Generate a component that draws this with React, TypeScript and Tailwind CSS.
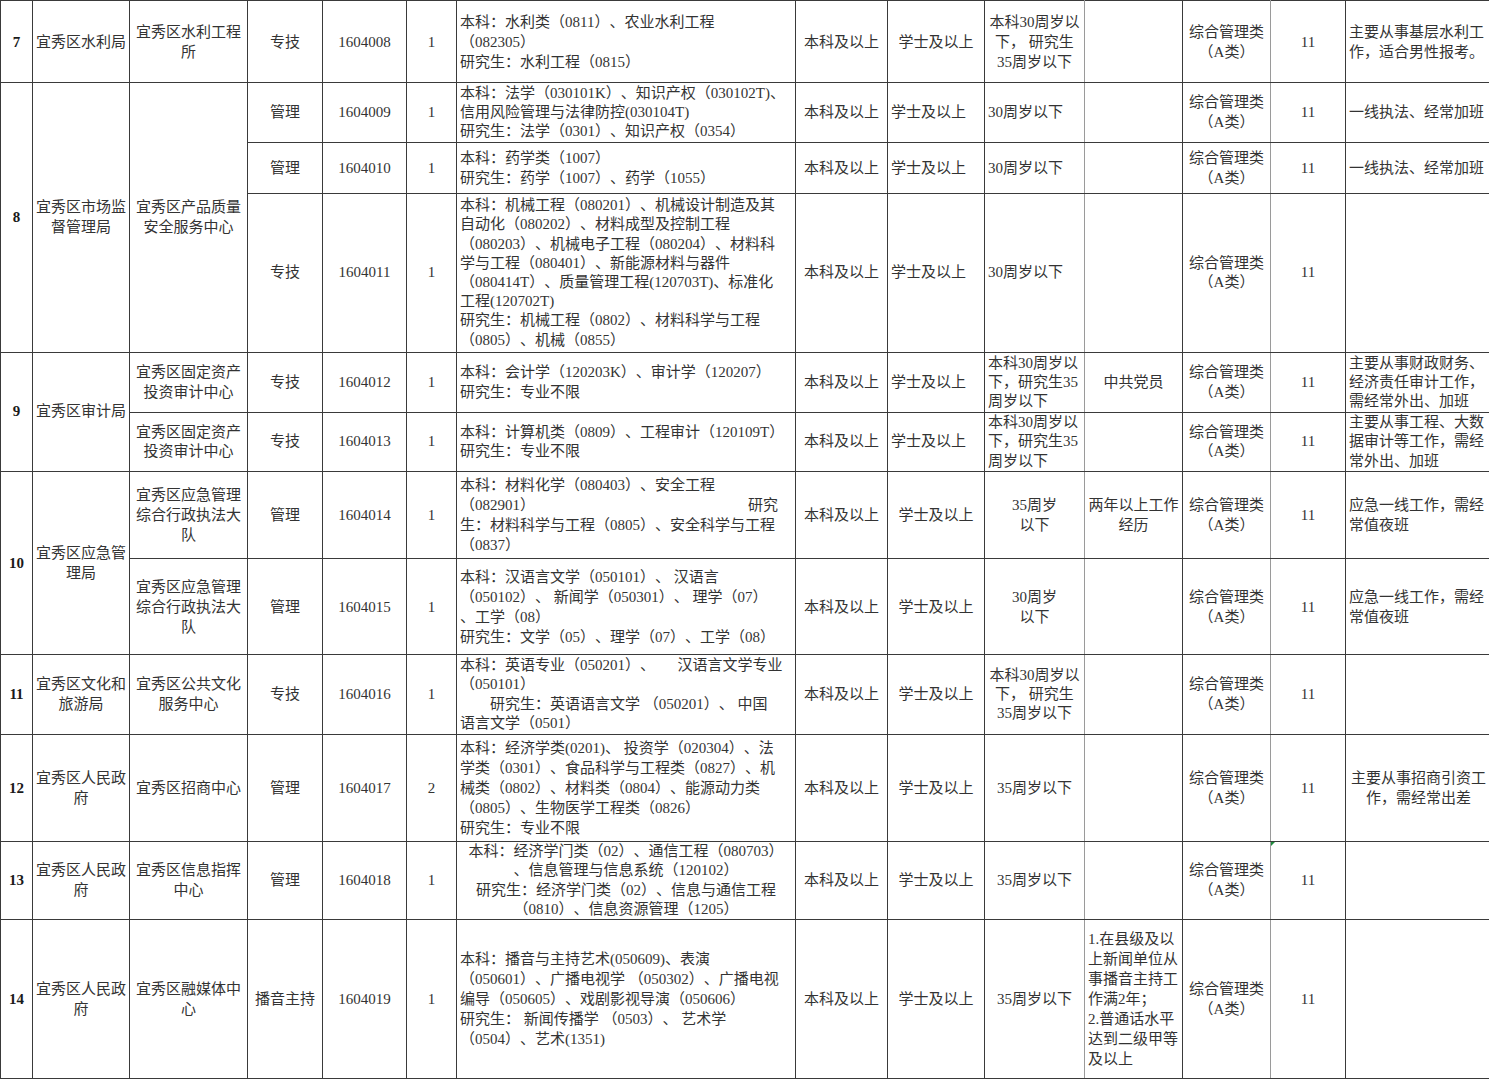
import React from 'react'

type Line = string | [string, string]
type Align = 'left' | 'center'

interface RowData {
  h: number
  tight?: boolean
  num?: string
  numSpan?: number
  dept?: string[]
  deptSpan?: number
  unit?: string[]
  unitSpan?: number
  type: string
  code: string
  count: string
  major: Line[]
  majorAlign?: Align
  degreeAlign: Align
  age: string[]
  ageAlign: Align
  other: string[]
  otherAlign: Align
  note: string[]
  noteAlign: Align
  marker?: boolean
}

const alignClass: Record<Align, string> = {
  left: 'text-left',
  center: 'text-center',
}

const rowHeight: Record<number, string> = {
  82: 'h-[82px]',
  60: 'h-[60px]',
  51: 'h-[51px]',
  159: 'h-[159px]',
  59: 'h-[59px]',
  87: 'h-[87px]',
  96: 'h-[96px]',
  80: 'h-[80px]',
  107: 'h-[107px]',
  78: 'h-[78px]',
}

const rows: RowData[] = [
  {
    h: 82,
    num: '7',
    dept: ['宜秀区水利局'],
    unit: ['宜秀区水利工程', '所'],
    type: '专技',
    code: '1604008',
    count: '1',
    major: ['本科：水利类（0811）、农业水利工程', '（082305）', '研究生：水利工程（0815）'],
    degreeAlign: 'center',
    age: ['本科30周岁以', '下， 研究生', '35周岁以下'],
    ageAlign: 'center',
    other: [],
    otherAlign: 'center',
    note: ['主要从事基层水利工', '作，适合男性报考。'],
    noteAlign: 'left',
  },
  {
    h: 60,
    tight: true,
    num: '8',
    numSpan: 3,
    dept: ['宜秀区市场监', '督管理局'],
    deptSpan: 3,
    unit: ['宜秀区产品质量', '安全服务中心'],
    unitSpan: 3,
    type: '管理',
    code: '1604009',
    count: '1',
    major: [
      '本科：法学（030101K）、知识产权（030102T)、',
      '信用风险管理与法律防控(030104T)',
      '研究生：法学（0301）、知识产权（0354）',
    ],
    degreeAlign: 'left',
    age: ['30周岁以下'],
    ageAlign: 'left',
    other: [],
    otherAlign: 'center',
    note: ['一线执法、经常加班'],
    noteAlign: 'left',
  },
  {
    h: 51,
    type: '管理',
    code: '1604010',
    count: '1',
    major: ['本科：药学类（1007）', '研究生：药学（1007）、药学（1055）'],
    degreeAlign: 'left',
    age: ['30周岁以下'],
    ageAlign: 'left',
    other: [],
    otherAlign: 'center',
    note: ['一线执法、经常加班'],
    noteAlign: 'left',
  },
  {
    h: 159,
    tight: true,
    type: '专技',
    code: '1604011',
    count: '1',
    major: [
      '本科：机械工程（080201）、机械设计制造及其',
      '自动化（080202）、材料成型及控制工程',
      '（080203）、机械电子工程（080204）、材料科',
      '学与工程（080401）、新能源材料与器件',
      '（080414T）、质量管理工程(120703T)、标准化',
      '工程(120702T)',
      '研究生：机械工程（0802）、材料科学与工程',
      '（0805）、机械（0855）',
    ],
    degreeAlign: 'left',
    age: ['30周岁以下'],
    ageAlign: 'left',
    other: [],
    otherAlign: 'center',
    note: [],
    noteAlign: 'left',
  },
  {
    h: 60,
    tight: true,
    num: '9',
    numSpan: 2,
    dept: ['宜秀区审计局'],
    deptSpan: 2,
    unit: ['宜秀区固定资产', '投资审计中心'],
    type: '专技',
    code: '1604012',
    count: '1',
    major: ['本科：会计学（120203K）、审计学（120207）', '研究生：专业不限'],
    degreeAlign: 'left',
    age: ['本科30周岁以', '下，研究生35', '周岁以下'],
    ageAlign: 'left',
    other: ['中共党员'],
    otherAlign: 'center',
    note: ['主要从事财政财务、', '经济责任审计工作，', '需经常外出、加班'],
    noteAlign: 'left',
  },
  {
    h: 59,
    tight: true,
    unit: ['宜秀区固定资产', '投资审计中心'],
    type: '专技',
    code: '1604013',
    count: '1',
    major: ['本科：计算机类（0809）、工程审计（120109T）', '研究生：专业不限'],
    degreeAlign: 'left',
    age: ['本科30周岁以', '下，研究生35', '周岁以下'],
    ageAlign: 'left',
    other: [],
    otherAlign: 'center',
    note: ['主要从事工程、大数', '据审计等工作，需经', '常外出、加班'],
    noteAlign: 'left',
  },
  {
    h: 87,
    num: '10',
    numSpan: 2,
    dept: ['宜秀区应急管', '理局'],
    deptSpan: 2,
    unit: ['宜秀区应急管理', '综合行政执法大', '队'],
    type: '管理',
    code: '1604014',
    count: '1',
    major: [
      '本科：材料化学（080403）、安全工程',
      ['（082901）', '研究'],
      '生：材料科学与工程（0805）、安全科学与工程',
      '（0837）',
    ],
    degreeAlign: 'center',
    age: ['35周岁', '以下'],
    ageAlign: 'center',
    other: ['两年以上工作', '经历'],
    otherAlign: 'center',
    note: ['应急一线工作，需经', '常值夜班'],
    noteAlign: 'left',
  },
  {
    h: 96,
    unit: ['宜秀区应急管理', '综合行政执法大', '队'],
    type: '管理',
    code: '1604015',
    count: '1',
    major: [
      '本科：汉语言文学（050101）、 汉语言',
      '（050102）、 新闻学（050301）、 理学（07）',
      '、工学（08）',
      '研究生：文学（05）、理学（07）、工学（08）',
    ],
    degreeAlign: 'center',
    age: ['30周岁', '以下'],
    ageAlign: 'center',
    other: [],
    otherAlign: 'center',
    note: ['应急一线工作，需经', '常值夜班'],
    noteAlign: 'left',
  },
  {
    h: 80,
    tight: true,
    num: '11',
    dept: ['宜秀区文化和', '旅游局'],
    unit: ['宜秀区公共文化', '服务中心'],
    type: '专技',
    code: '1604016',
    count: '1',
    major: [
      '本科：英语专业（050201）、　  汉语言文学专业',
      '（050101）',
      '　　研究生：英语语言文学 （050201）、 中国',
      '语言文学（0501）',
    ],
    degreeAlign: 'center',
    age: ['本科30周岁以', '下， 研究生', '35周岁以下'],
    ageAlign: 'center',
    other: [],
    otherAlign: 'center',
    note: [],
    noteAlign: 'left',
  },
  {
    h: 107,
    num: '12',
    dept: ['宜秀区人民政', '府'],
    unit: ['宜秀区招商中心'],
    type: '管理',
    code: '1604017',
    count: '2',
    major: [
      '本科：经济学类(0201)、 投资学（020304）、法',
      '学类（0301）、食品科学与工程类（0827）、机',
      '械类（0802）、材料类（0804）、能源动力类',
      '（0805）、生物医学工程类（0826）',
      '研究生：专业不限',
    ],
    degreeAlign: 'center',
    age: ['35周岁以下'],
    ageAlign: 'center',
    other: [],
    otherAlign: 'center',
    note: ['主要从事招商引资工', '作，需经常出差'],
    noteAlign: 'center',
  },
  {
    h: 78,
    tight: true,
    num: '13',
    dept: ['宜秀区人民政', '府'],
    unit: ['宜秀区信息指挥', '中心'],
    type: '管理',
    code: '1604018',
    count: '1',
    major: [
      '本科：经济学门类（02）、通信工程（080703）',
      '、信息管理与信息系统（120102）',
      '研究生：经济学门类（02）、信息与通信工程',
      '（0810）、信息资源管理（1205）',
    ],
    majorAlign: 'center',
    degreeAlign: 'center',
    age: ['35周岁以下'],
    ageAlign: 'center',
    other: [],
    otherAlign: 'center',
    note: [],
    noteAlign: 'left',
    marker: true,
  },
  {
    h: 159,
    num: '14',
    dept: ['宜秀区人民政', '府'],
    unit: ['宜秀区融媒体中', '心'],
    type: '播音主持',
    code: '1604019',
    count: '1',
    major: [
      '本科：播音与主持艺术(050609)、表演',
      '（050601）、广播电视学 （050302）、广播电视',
      '编导（050605）、戏剧影视导演（050606）',
      '研究生： 新闻传播学 （0503）、 艺术学',
      '（0504）、艺术(1351)',
    ],
    degreeAlign: 'center',
    age: ['35周岁以下'],
    ageAlign: 'center',
    other: ['1.在县级及以', '上新闻单位从', '事播音主持工', '作满2年；', '2.普通话水平', '达到二级甲等', '及以上'],
    otherAlign: 'left',
    note: [],
    noteAlign: 'left',
  },
]

const base = 'border border-[#3a3a3a] px-[3px] py-0 align-middle'

function Lines({ lines }: { lines: Line[] }) {
  return (
    <>
      {lines.map((l, i) =>
        typeof l === 'string' ? (
          <div key={i} className="whitespace-pre">
            {l}
          </div>
        ) : (
          <div key={i} className="flex justify-between whitespace-pre pr-[14px]">
            <span>{l[0]}</span>
            <span>{l[1]}</span>
          </div>
        )
      )}
    </>
  )
}

export default function App() {
  return (
    <div className="w-[1489px] h-[1080px] overflow-hidden bg-white text-[15px] text-[#333] [text-spacing-trim:space-all] font-['Liberation_Serif','Noto_Sans_CJK_SC',serif]">
      <table className="table-fixed border-collapse w-[1491px]">
        <colgroup>
          <col className="w-[32px]" />
          <col className="w-[97px]" />
          <col className="w-[118px]" />
          <col className="w-[75px]" />
          <col className="w-[84px]" />
          <col className="w-[50px]" />
          <col className="w-[339px]" />
          <col className="w-[92px]" />
          <col className="w-[97px]" />
          <col className="w-[100px]" />
          <col className="w-[98px]" />
          <col className="w-[88px]" />
          <col className="w-[75px]" />
          <col className="w-[146px]" />
        </colgroup>
        <tbody>
          {rows.map((r, i) => {
            const cell = `${base} ${r.tight ? 'leading-[19.2px]' : 'leading-[20px]'}`
            return (
              <tr key={i} className={rowHeight[r.h]}>
                {r.num && (
                  <td rowSpan={r.numSpan ?? 1} className={`${cell} text-center font-bold text-[#1a1a1a]`}>
                    {r.num}
                  </td>
                )}
                {r.dept && (
                  <td rowSpan={r.deptSpan ?? 1} className={`${cell} text-center`}>
                    <Lines lines={r.dept} />
                  </td>
                )}
                {r.unit && (
                  <td rowSpan={r.unitSpan ?? 1} className={`${cell} text-center`}>
                    <Lines lines={r.unit} />
                  </td>
                )}
                <td className={`${cell} text-center`}>{r.type}</td>
                <td className={`${cell} text-center`}>{r.code}</td>
                <td className={`${cell} text-center`}>{r.count}</td>
                <td className={`${cell} ${alignClass[r.majorAlign ?? 'left']}`}>
                  <Lines lines={r.major} />
                </td>
                <td className={`${cell} text-center`}>本科及以上</td>
                <td className={`${cell} ${alignClass[r.degreeAlign]}`}>学士及以上</td>
                <td className={`${cell} border-r-[#9a9a9a] ${alignClass[r.ageAlign]}`}>
                  <Lines lines={r.age} />
                </td>
                <td className={`${cell} ${alignClass[r.otherAlign]}`}>
                  <Lines lines={r.other} />
                </td>
                <td className={`${cell} border-r-[#9a9a9a] text-center`}>
                  <Lines lines={['综合管理类', '（A类）']} />
                </td>
                <td className={`${cell} relative text-center`}>
                  {r.marker && (
                    <span className="absolute left-0 top-0 w-0 h-0 border-t-[4px] border-r-[4px] border-t-[#1e8a3c] border-r-transparent" />
                  )}
                  11
                </td>
                <td className={`${cell} ${alignClass[r.noteAlign]}`}>
                  <Lines lines={r.note} />
                </td>
              </tr>
            )
          })}
        </tbody>
      </table>
    </div>
  )
}
